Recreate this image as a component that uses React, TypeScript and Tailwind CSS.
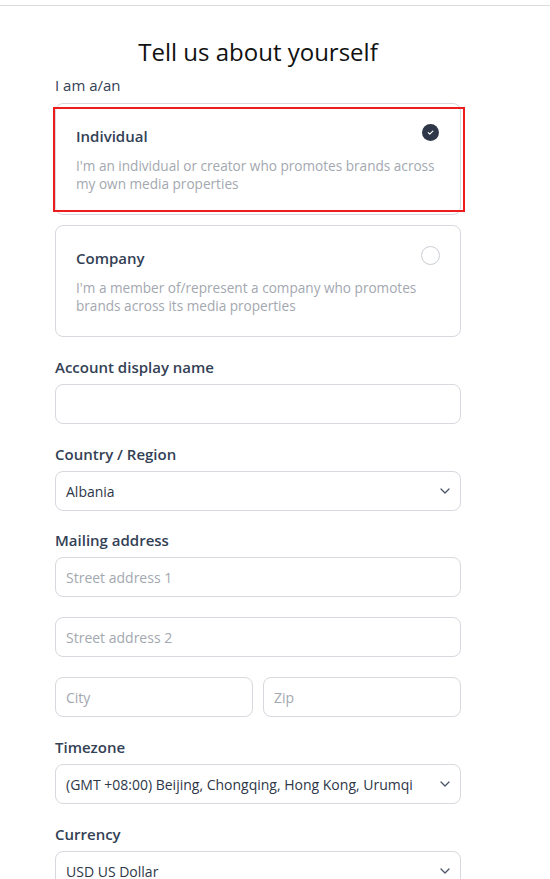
import React from "react";

const font = { fontFamily: '"Open Sans", "Lato", sans-serif' };

const Chevron = () => (
  <svg width="12" height="12" viewBox="0 0 12 12" fill="none" className="text-[#4a5568]">
    <path d="M2 4l4 4 4-4" stroke="currentColor" strokeWidth="1.3" strokeLinecap="round" strokeLinejoin="round" />
  </svg>
);

interface OptionProps {
  title: string;
  desc: string;
  checked?: boolean;
  highlight?: boolean;
}

const OptionCard = ({ title, desc, checked, highlight }: OptionProps) => (
  <div className="relative h-[112px] rounded-lg border border-[#d6d9de] px-5 pt-[21px]">
    <div className="flex items-start justify-between">
      <p className="text-[15px] font-semibold leading-[22px] text-[#334155]">{title}</p>
      {checked ? (
        <div className="mt-[-1px] mr-[1px] flex h-[17px] w-[17px] items-center justify-center rounded-full bg-[#2d3748]">
          <svg width="9" height="9" viewBox="0 0 10 10" fill="none">
            <path d="M2.5 5.2l1.7 1.6L7.6 3.4" stroke="white" strokeWidth="1.3" strokeLinecap="round" strokeLinejoin="round" />
          </svg>
        </div>
      ) : (
        <div className="mt-[-1px] mr-[0px] h-[19px] w-[19px] rounded-full border border-[#c9cdd3]" />
      )}
    </div>
    <p className="mt-[10px] text-[13.6px] leading-[18px] text-[#a3a8b0]">{desc}</p>
    {highlight && (
      <div className="pointer-events-none absolute left-[-3px] top-[3px] h-[105px] w-[412px] border-2 border-[#ee1c1c]" />
    )}
  </div>
);

const Label = ({ children, className = "" }: { children: React.ReactNode; className?: string }) => (
  <p className={"text-[15px] leading-[20px] text-[#334155] " + className}>{children}</p>
);

const Input = ({ placeholder, className = "" }: { placeholder?: string; className?: string }) => (
  <div className={"flex h-[40px] items-center rounded-lg border border-[#d6d9de] px-[10px] " + className}>
    {placeholder && <span className="text-[14px] text-[#a3a8b0]">{placeholder}</span>}
  </div>
);

const Select = ({ value }: { value: string }) => (
  <div className="flex h-[40px] items-center justify-between rounded-lg border border-[#d6d9de] pl-[10px] pr-[9px]">
    <span className="text-[14px] text-[#2d3748]">{value}</span>
    <Chevron />
  </div>
);

export default function App() {
  return (
    <div className="h-screen overflow-hidden bg-white" style={font}>
      <div className="h-[6px] border-b border-[#dcdcdc]" />
      <div className="ml-[55px] w-[406px] pt-[31px]">
        <h1 className="text-center text-[24px] leading-[30px] font-medium text-[#111]">Tell us about yourself</h1>
        <Label className="mt-[8px] font-normal">I am a/an</Label>
        <div className="mt-[8px] flex flex-col gap-[10px]">
          <OptionCard
            title="Individual"
            desc="I'm an individual or creator who promotes brands across my own media properties"
            checked
            highlight
          />
          <OptionCard
            title="Company"
            desc="I'm a member of/represent a company who promotes brands across its media properties"
          />
        </div>

        <Label className="mt-[20px] font-semibold">Account display name</Label>
        <Input className="mt-[7px]" />

        <Label className="mt-[20px] font-semibold">Country / Region</Label>
        <div className="mt-[7px]">
          <Select value="Albania" />
        </div>

        <Label className="mt-[19px] font-semibold">Mailing address</Label>
        <div className="mt-[7px] flex flex-col gap-[20px]">
          <Input placeholder="Street address 1" />
          <Input placeholder="Street address 2" />
          <div className="flex gap-[10px]">
            <Input placeholder="City" className="flex-1" />
            <Input placeholder="Zip" className="flex-1" />
          </div>
        </div>

        <Label className="mt-[20px] font-semibold">Timezone</Label>
        <div className="mt-[7px]">
          <Select value="(GMT +08:00) Beijing, Chongqing, Hong Kong, Urumqi" />
        </div>

        <Label className="mt-[20px] font-semibold">Currency</Label>
        <div className="mt-[7px]">
          <Select value="USD US Dollar" />
        </div>
      </div>
    </div>
  );
}
